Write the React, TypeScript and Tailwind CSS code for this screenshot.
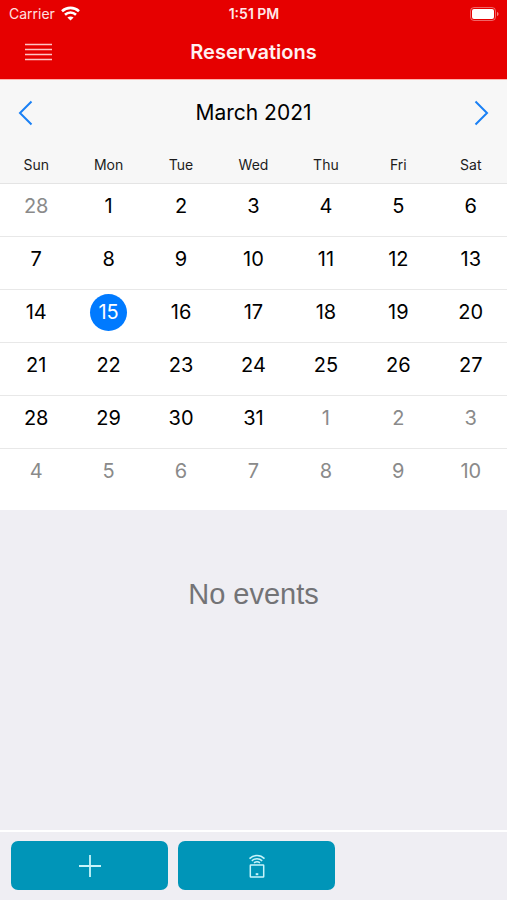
import type { FC } from 'react';

type Day = { date: number; outside?: boolean; selected?: boolean };

const WEEKDAYS = ['Sun', 'Mon', 'Tue', 'Wed', 'Thu', 'Fri', 'Sat'];

const FIRST_VISIBLE = new Date(2021, 1, 28);

const buildWeeks = (selected: number): Day[][] =>
  Array.from({ length: 6 }, (_, week) =>
    Array.from({ length: 7 }, (_, day) => {
      const current = new Date(FIRST_VISIBLE);
      current.setDate(current.getDate() + week * 7 + day);
      const outside = current.getMonth() !== 2;
      return {
        date: current.getDate(),
        outside,
        selected: !outside && current.getDate() === selected,
      };
    }),
  );

const dayClass = (day: Day) => {
  if (day.selected) return 'bg-[#007aff] text-white';
  return day.outside ? 'text-[#8a8a8a]' : 'text-black';
};

const StatusBar: FC = () => (
  <div className="grid h-[27px] grid-cols-3 items-center pr-2 pl-[9px] text-[14px] text-white">
    <div className="flex items-center gap-[6px] text-[#ffe0e0]">
      <span>Carrier</span>
      <svg width="19" height="15" viewBox="0 0 19 15" fill="none" stroke="white" strokeWidth="2.6">
        <path d="M1 5.2C5.8.7 13.2.7 18 5.2" />
        <path d="M4 8.7c3.1-2.9 7.9-2.9 11 0" />
        <path d="M9.5 14.5 6.4 11.6c1.7-1.6 4.5-1.6 6.2 0z" fill="white" stroke="none" />
      </svg>
    </div>
    <span className="text-center font-semibold text-[#ffe8e8]">1:51 PM</span>
    <svg className="justify-self-end" width="29" height="14" viewBox="0 0 29 14" fill="none">
      <rect x="0.5" y="0.5" width="25" height="13" rx="3.5" stroke="white" strokeOpacity="0.4" />
      <rect x="2" y="2" width="22" height="10" rx="2" fill="white" />
      <path d="M27 5c2 .6 2 3.4 0 4z" fill="white" fillOpacity="0.5" />
    </svg>
  </div>
);

const NavBar: FC = () => (
  <div className="grid h-[52px] grid-cols-[77px_1fr_77px] items-center pb-[2px] text-white">
    <button type="button" aria-label="Menu" className="justify-self-center">
      <svg width="27" height="18" viewBox="0 0 27 18" stroke="#ffc4c4" strokeWidth="1.7">
        <path d="M0 1.5h27M0 6.5h27M0 11.5h27M0 16.5h27" />
      </svg>
    </button>
    <h1 className="text-center text-[20px] font-semibold text-[#fff0f0]">Reservations</h1>
  </div>
);

const Calendar: FC = () => (
  <section>
    <div className="flex h-[66px] items-center justify-between bg-[#f7f7f7] px-[18px]">
      <button type="button" aria-label="Previous month">
        <svg width="15" height="26" viewBox="0 0 15 26" fill="none" stroke="#1a80f5" strokeWidth="2">
          <path d="M13.5 1.5 2 13l11.5 11.5" />
        </svg>
      </button>
      <h2 className="text-[21px] text-black">March 2021</h2>
      <button type="button" aria-label="Next month">
        <svg width="15" height="26" viewBox="0 0 15 26" fill="none" stroke="#1a80f5" strokeWidth="2">
          <path d="M1.5 1.5 13 13 1.5 24.5" />
        </svg>
      </button>
    </div>
    <table className="w-full table-fixed border-collapse bg-white text-center">
      <thead className="bg-[#f7f7f7]">
        <tr className="border-b border-[#e4e4e4]">
          {WEEKDAYS.map((name) => (
            <th key={name} scope="col" className="h-[37px] p-0 text-[14px] font-normal text-[#1c1c1c]">
              {name}
            </th>
          ))}
        </tr>
      </thead>
      <tbody>
        {buildWeeks(15).map((week, index) => (
          <tr key={index} className="border-b border-[#e8e8e8] last:border-b-0">
            {week.map((day, column) => (
              <td key={column} className="h-[53px] p-0 pt-1 align-top">
                <button
                  type="button"
                  className={`h-[37px] w-[37px] rounded-full text-[20px] leading-[37px] ${dayClass(day)}`}
                >
                  {day.date}
                </button>
              </td>
            ))}
          </tr>
        ))}
      </tbody>
    </table>
    <div className="h-[9px] bg-white" />
  </section>
);

const ActionBar: FC = () => (
  <footer className="grid grid-cols-3 gap-[10px] border-t-2 border-white pt-[9px] pr-[5px] pb-[10px] pl-[11px]">
    <button
      type="button"
      aria-label="Add reservation"
      className="flex h-[49px] items-center justify-center rounded-[7px] bg-[#0095b8]"
    >
      <svg width="22" height="22" viewBox="0 0 22 22" stroke="#c8f4fa" strokeWidth="1.8">
        <path d="M11 0v22M0 11h22" />
      </svg>
    </button>
    <button
      type="button"
      aria-label="Scan device"
      className="flex h-[49px] items-center justify-center rounded-[7px] bg-[#0095b8]"
    >
      <svg width="18" height="24" viewBox="0 0 18 24" fill="none" stroke="#c8f4fa" strokeWidth="1.5">
        <path d="M1.5 4.6c4.2-4.2 10.8-4.2 15 0" />
        <path d="M3.8 6.9c3-2.8 7.4-2.8 10.4 0" />
        <path d="M6 8.9c1.8-1.4 4.2-1.4 6 0" />
        <rect x="2.3" y="11" width="13.4" height="12" rx="0.5" />
        <path d="M7.7 20.2h2.6" strokeWidth="2" />
      </svg>
    </button>
  </footer>
);

const App: FC = () => (
  <div className="flex min-h-screen flex-col bg-[#efeef3] font-['Inter','Liberation_Sans',sans-serif]">
    <header className="border-b border-[#ffb3ae] bg-[#e60000]">
      <StatusBar />
      <NavBar />
    </header>
    <Calendar />
    <main className="flex-1 pt-[66px] text-center">
      <p className="font-['Liberation_Sans',sans-serif] text-[29px] leading-9 text-[#737376]">No events</p>
    </main>
    <ActionBar />
  </div>
);

export default App;
